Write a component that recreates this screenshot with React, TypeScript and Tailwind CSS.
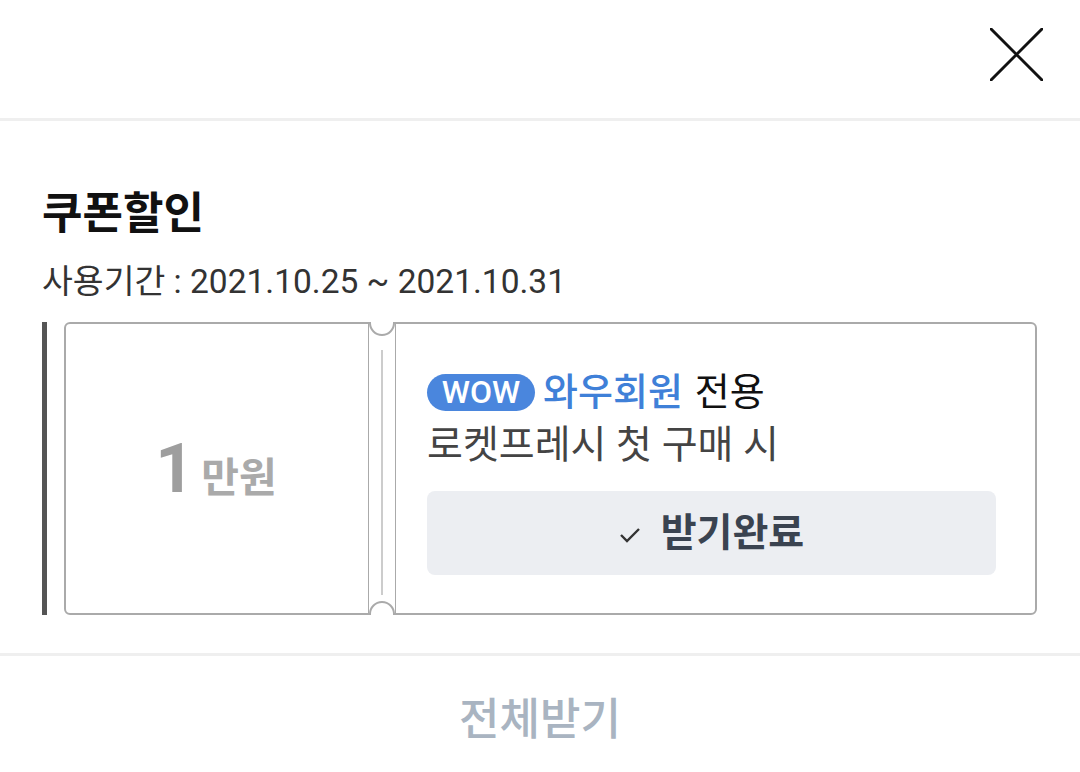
import React from "react";

const FONT = { fontFamily: "Roboto, 'Noto Sans CJK KR', 'Noto Sans', sans-serif" };

function Notch() {
  return (
    <div className="relative w-[26px] shrink-0 self-stretch">
      <svg className="absolute inset-0 h-full w-full" viewBox="0 0 26 293" preserveAspectRatio="none">
        <path d="M0 1 H1 A12 12 0 0 0 25 1 H26" fill="none" stroke="#aaaaaa" strokeWidth="2" />
        <path d="M0 292 H1 A12 12 0 0 1 25 292 H26" fill="none" stroke="#aaaaaa" strokeWidth="2" />
        <line x1="13" y1="28" x2="13" y2="273" stroke="#cccccc" strokeWidth="2" />
      </svg>
    </div>
  );
}

export default function App() {
  return (
    <div className="w-[1080px] h-[772px] bg-white flex flex-col overflow-hidden" style={FONT}>
      <div className="h-[118px] flex justify-end items-start pt-[28px] pr-[37px] shrink-0">
        <svg width="53" height="53" viewBox="0 0 53 53">
          <path d="M1 1 L52 52 M52 1 L1 52" stroke="#111111" strokeWidth="3" strokeLinecap="round" />
        </svg>
      </div>
      <div className="h-[3px] bg-[#efefef] shrink-0" />

      <div className="pl-[42px] pr-[43px] pt-[67px] shrink-0">
        <div className="text-[44px] leading-[52px] font-bold text-[#111111]">쿠폰할인</div>
        <div className="mt-[22px] text-[33.5px] leading-[40px] text-[#333333]">사용기간 : 2021.10.25 ~ 2021.10.31</div>

        <div className="mt-[20px] flex h-[293px]">
          <div className="w-[5px] bg-[#555555] shrink-0" />
          <div className="ml-[17px] flex flex-1">
            <div className="w-[305px] shrink-0 border-2 border-r border-[#aaaaaa] rounded-l-[6px] flex items-center justify-center">
              <div className="flex items-baseline text-[#9e9e9e] font-bold mr-[2px]">
                <span className="text-[68px] leading-none">1</span>
                <span className="ml-[7px] text-[41px] leading-none text-[#aaaaaa]">만원</span>
              </div>
            </div>
            <Notch />
            <div className="flex-1 border-2 border-l border-[#aaaaaa] rounded-r-[6px] flex flex-col pt-[47px] pl-[31px] pr-[39px]">
              <div className="flex items-center h-[42px]">
                <span className="h-[37px] w-[108px] rounded-full bg-[#4a86dd] text-white text-[32px] font-medium flex items-center justify-center leading-none">WOW</span>
                <span className="ml-[8px] text-[38px] font-medium text-[#3f80d8] leading-none">와우회원</span>
                <span className="ml-[12px] text-[38px] text-[#111111] leading-none">전용</span>
              </div>
              <div className="mt-[10px] text-[39px] leading-[44px] text-[#444444]">로켓프레시 첫 구매 시</div>
              <div className="mt-[24px] h-[84px] rounded-[8px] bg-[#eceef2] flex items-center justify-center">
                <svg width="22" height="18" viewBox="0 0 22 18" className="mr-[20px] mt-[4px]">
                  <path d="M2 9 L8 15 L20 3" fill="none" stroke="#333333" strokeWidth="2.4" />
                </svg>
                <span className="text-[39px] font-bold text-[#3a4350] leading-none">받기완료</span>
              </div>
            </div>
          </div>
        </div>
      </div>

      <div className="mt-[38px] h-[3px] bg-[#efefef] shrink-0" />
      <div className="flex-1 flex items-start justify-center pt-[36px]">
        <span className="text-[44px] font-medium text-[#a9b4c1] leading-[56px]">전체받기</span>
      </div>
    </div>
  );
}
